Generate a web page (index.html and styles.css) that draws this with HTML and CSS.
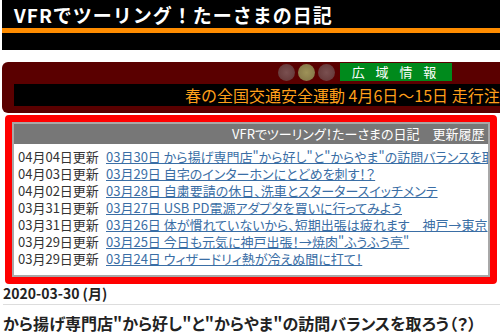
FILE: index.html
```html
<!DOCTYPE html>
<html lang="ja">
<head>
<meta charset="utf-8">
<link rel="stylesheet" href="styles.css">
</head>
<body>
<header class="site-header">
  <h1 class="site-title">VFRでツーリング！たーさまの日記</h1>
  <div class="orange-bar"></div>
</header>

<section class="info-board">
  <div class="info-top">
    <span class="lamp lamp-red"></span>
    <span class="lamp lamp-yellow"></span>
    <span class="lamp lamp-red"></span>
    <span class="info-label">広 域 情 報</span>
  </div>
  <div class="info-ticker">春の全国交通安全運動 4月6日～15日 走行注意</div>
</section>

<section class="history-box">
  <div class="history-inner">
    <div class="history-head"><span>VFRでツーリング！たーさまの日記　更新履歴</span></div>
    <ul class="history-list">
      <li><span class="upd">04月04日更新</span><a href="#">03月30日 から揚げ専門店"から好し"と"からやま"の訪問バランスを取ろう（？）</a></li>
      <li><span class="upd">04月03日更新</span><a href="#">03月29日 自宅のインターホンにとどめを刺す！？</a></li>
      <li><span class="upd">04月02日更新</span><a href="#">03月28日 自粛要請の休日、洗車とスタータースイッチメンテ</a></li>
      <li><span class="upd">03月31日更新</span><a href="#">03月27日 USB PD電源アダプタを買いに行ってみよう</a></li>
      <li><span class="upd">03月31日更新</span><a href="#">03月26日 体が慣れていないから、短期出張は疲れます　神戸→東京</a></li>
      <li><span class="upd">03月29日更新</span><a href="#">03月25日 今日も元気に神戸出張！→焼肉"ふうふう亭"</a></li>
      <li><span class="upd">03月29日更新</span><a href="#">03月24日 ウィザードリィ熱が冷えぬ間に打て！</a></li>
    </ul>
  </div>
</section>

<div class="entry-date">2020-03-30 (月)</div>
<h2 class="entry-title">から揚げ専門店"から好し"と"からやま"の訪問バランスを取ろう（？）</h2>
</body>
</html>
```

FILE: styles.css
```css
html, body {
  margin: 0;
  padding: 0;
  overflow: hidden;
}
body {
  width: 500px;
  height: 334px;
  font-family: "Noto Sans CJK JP", "Noto Sans", sans-serif;
  background: #fff;
  color: #222;
}
.site-header {
  margin-left: 2px;
  height: 50px;
  background: #000;
  padding-top: 4px;
  box-sizing: border-box;
}
.site-title {
  margin: 0 0 0 12px;
  font-size: 19px;
  letter-spacing: 1px;
  line-height: 22px;
  color: #fff;
  font-weight: bold;
  white-space: nowrap;
}
.orange-bar {
  margin-top: 2px;
  height: 5px;
  background: #ff8c00;
}
.info-board {
  margin: 12px 0 0 2px;
  width: 560px;
  height: 51px;
  background: #5a0000;
  border-radius: 6px;
  padding: 1px 0 0 12px;
  box-sizing: border-box;
}
.info-top {
  display: flex;
  align-items: center;
  height: 18px;
  padding-left: 264px;
}
.lamp {
  width: 17px;
  height: 17px;
  border-radius: 50%;
  margin-right: 3px;
}
.lamp-red {
  background: radial-gradient(circle, #7a5050 0%, #683c3c 70%, #5a2a2a 100%);
}
.lamp-yellow {
  background: radial-gradient(circle, #9e9258 0%, #887a4a 70%, #70633a 100%);
}
.info-label {
  margin-left: 2px;
  width: 112px;
  height: 18px;
  background: #008a1c;
  color: #fff;
  font-size: 13px;
  line-height: 18px;
  text-align: center;
  letter-spacing: 4px;
}
.info-ticker {
  margin-top: 3px;
  height: 22px;
  background: #000;
  color: #ff9f1a;
  font-size: 16px;
  line-height: 22px;
  padding-left: 171px;
  white-space: nowrap;
  overflow: hidden;
}
.history-box {
  margin: 2px 3px 0 5px;
  height: 169px;
  border: 7px solid #f00;
  border-radius: 4px;
  box-sizing: border-box;
  overflow: hidden;
}
.history-inner {
  height: 100%;
  border: 2px solid #a8a8a8;
  box-sizing: border-box;
  background: #fff;
  overflow: hidden;
}
.history-head {
  height: 20px;
  background: #777;
  color: #fff;
  font-size: 13px;
  line-height: 20px;
  padding-left: 218px;
  white-space: nowrap;
  overflow: hidden;
  font-feature-settings: "palt";
}
.history-list {
  list-style: none;
  margin: 4px 0 0 0;
  padding: 0 0 0 4px;
}
.history-list li {
  display: flex;
  height: 17px;
  line-height: 17px;
  white-space: nowrap;
  overflow: hidden;
}
.upd {
  flex: none;
  width: 88px;
  font-size: 13px;
  color: #333;
}
.history-list a {
  font-size: 13px;
  color: #3a6ea5;
  text-decoration: underline;
  font-feature-settings: "palt";
}
.entry-date {
  margin: 0 0 0 3px;
  font-size: 14px;
  font-weight: bold;
  color: #222;
  line-height: 18px;
  padding-bottom: 2px;
  border-bottom: 1px solid #ddd;
}
.entry-title {
  margin: 7px 0 0 3px;
  font-size: 16px;
  font-weight: bold;
  color: #222;
  line-height: 22px;
  white-space: nowrap;
  font-feature-settings: "palt";
}
```
